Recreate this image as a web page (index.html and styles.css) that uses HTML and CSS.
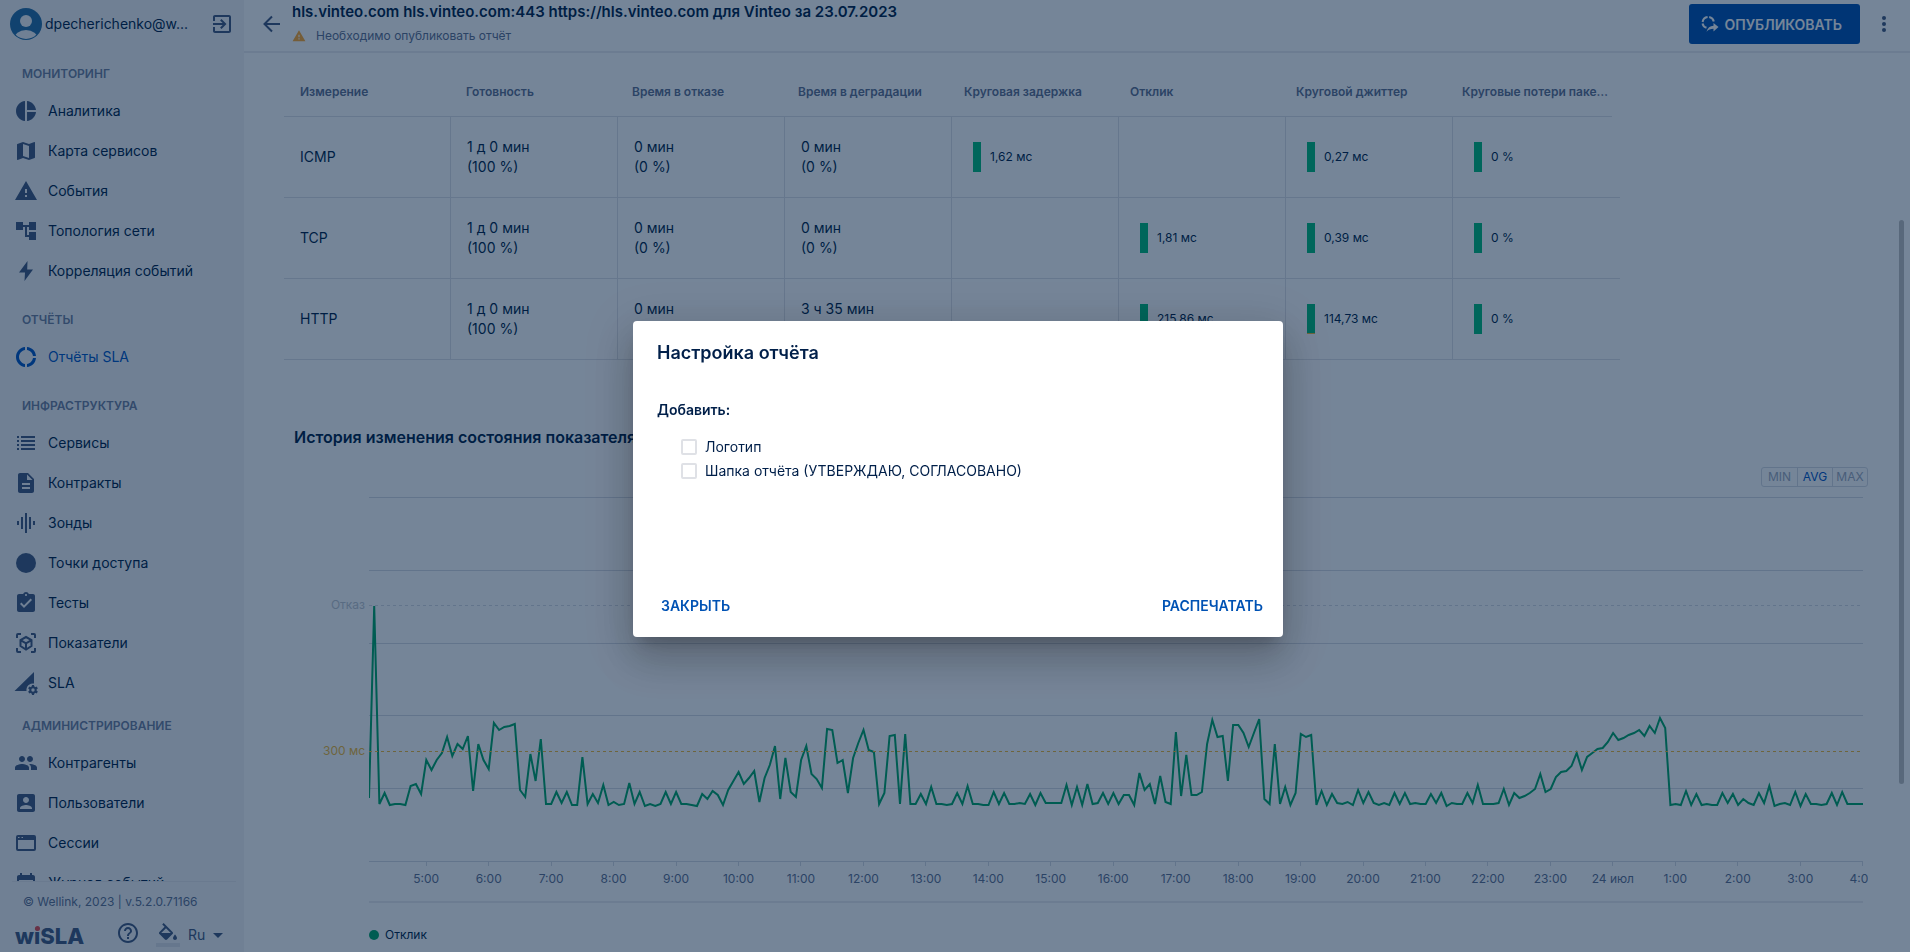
FILE: index.html
```html
<!DOCTYPE html>
<html lang="ru">
<head>
    <meta charset="UTF-8">
    <meta name="viewport" content="width=device-width, initial-scale=1.0">
    <title>wiSLA - Отчёты SLA</title>
    <link rel="stylesheet" href="styles.css">
</head>
<body>

<div class="app">
    <!-- Sidebar -->
    <aside class="sidebar">
        <div class="user">
            <svg class="avatar" viewBox="0 0 32 32">
                <defs><clipPath id="avatar-clip"><circle cx="16" cy="16" r="15"/></clipPath></defs>
                <circle cx="16" cy="16" r="16" fill="#276ea5"/>
                <g clip-path="url(#avatar-clip)" fill="#f4f5f7">
                    <circle cx="16" cy="13" r="6"/>
                    <ellipse cx="16" cy="31" rx="12" ry="9"/>
                </g>
            </svg>
            <span class="user-name">dpecherichenko@w...</span>
            <button class="icon-btn" aria-label="Выйти">
                <svg class="icon" viewBox="0 0 24 24"><path d="M10.09 15.59L11.5 17l5-5-5-5-1.41 1.41L12.67 11H3v2h9.67l-2.58 2.59zM19 3H5c-1.11 0-2 .9-2 2v4h2V5h14v14H5v-4H3v4c0 1.1.89 2 2 2h14c1.1 0 2-.9 2-2V5c0-1.1-.9-2-2-2z"/></svg>
            </button>
        </div>

        <nav class="nav">
            <section class="nav-section">
                <h2 class="nav-title">МОНИТОРИНГ</h2>
                <a class="nav-item" href="#"><svg class="icon" viewBox="0 0 24 24"><path d="M11 2v20c-5.07-.5-9-4.79-9-10s3.93-9.5 9-10zm2.03 0v8.99H22c-.47-4.74-4.24-8.52-8.97-8.99zm0 11.01V22c4.74-.47 8.5-4.25 8.97-8.99h-8.97z"/></svg>Аналитика</a>
                <a class="nav-item" href="#"><svg class="icon" viewBox="0 0 24 24"><path d="M20.5 3l-.16.03L15 5.1 9 3 3.36 4.9c-.21.07-.36.25-.36.48V20.5c0 .28.22.5.5.5l.16-.03L9 18.9l6 2.1 5.64-1.9c.21-.07.36-.25.36-.48V3.5c0-.28-.22-.5-.5-.5zM15 19l-6-2.11V5l6 2.11V19z"/></svg>Карта сервисов</a>
                <a class="nav-item" href="#"><svg class="icon" viewBox="0 0 24 24"><path d="M1 21h22L12 2 1 21zm12-3h-2v-2h2v2zm0-4h-2v-4h2v4z"/></svg>События</a>
                <a class="nav-item" href="#"><svg class="icon" viewBox="0 0 24 24"><path d="M22 11V3h-7v3H9V3H2v8h7V8h2v10h4v3h7v-8h-7v3h-2V8h2v3z"/></svg>Топология сети</a>
                <a class="nav-item" href="#"><svg class="icon" viewBox="0 0 24 24"><path d="M13.500 2L5 13.500h6L10.500 22 19 10.500h-5.800z"/></svg>Корреляция событий</a>
            </section>
            <section class="nav-section">
                <h2 class="nav-title">ОТЧЁТЫ</h2>
                <a class="nav-item active" href="#"><svg class="icon" viewBox="0 0 24 24"><path d="M11 5.080V2c-5 .5-9 4.810-9 10s4 9.500 9 10v-3.080c-3-.480-6-3.400-6-6.920s3-6.440 6-6.920zM18.970 11H22c-.470-5-4-8.530-9-9v3.080C16 5.510 18.540 8 18.970 11zM13 18.920V22c5-.470 8.530-4 9-9h-3.030c-.430 3-2.970 5.490-5.970 5.920z"/></svg>Отчёты SLA</a>
            </section>
            <section class="nav-section">
                <h2 class="nav-title">ИНФРАСТРУКТУРА</h2>
                <a class="nav-item" href="#"><svg class="icon" viewBox="0 0 24 24"><path d="M3 5h2v2H3zM7 5h14v2H7zM3 9h2v2H3zM7 9h14v2H7zM3 13h2v2H3zM7 13h14v2H7zM3 17h2v2H3zM7 17h14v2H7z"/></svg>Сервисы</a>
                <a class="nav-item" href="#"><svg class="icon" viewBox="0 0 24 24"><path d="M14 2H6c-1.100 0-1.990.900-1.990 2L4 20c0 1.100.890 2 1.990 2H18c1.100 0 2-.900 2-2V8l-6-6zm2 16H8v-2h8v2zm0-4H8v-2h8v2zm-3-5V3.500L18.500 9H13z"/></svg>Контракты</a>
                <a class="nav-item" href="#"><svg class="icon" viewBox="0 0 24 24"><path d="M7 18h2V6H7v12zm4 4h2V2h-2v20zm-8-8h2v-4H3v4zm12 4h2V6h-2v12zm4-8v4h2v-4h-2z"/></svg>Зонды</a>
                <a class="nav-item" href="#"><svg class="icon" viewBox="0 0 24 24"><circle cx="12" cy="12" r="10"/></svg>Точки доступа</a>
                <a class="nav-item" href="#"><svg class="icon" viewBox="0 0 24 24"><path d="M19 3h-4.180C14.400 1.840 13.300 1 12 1c-1.300 0-2.400.840-2.820 2H5c-1.100 0-2 .900-2 2v14c0 1.100.900 2 2 2h14c1.100 0 2-.900 2-2V5c0-1.100-.900-2-2-2zm-7 0c.550 0 1 .450 1 1s-.450 1-1 1-1-.450-1-1 .450-1 1-1zm-2 14l-4-4 1.410-1.410L10 14.170l6.590-6.590L18 9l-8 8z"/></svg>Тесты</a>
                <a class="nav-item" href="#"><svg class="icon" viewBox="0 0 24 24"><path fill="none" stroke="currentColor" stroke-width="2" d="M3 7V4q0-1 1-1h3M17 3h3q1 0 1 1v3M21 17v3q0 1-1 1h-3M7 21H4q-1 0-1-1v-3M12 6l5.500 3v6L12 18.500 6.500 15V9zM6.500 9.200L12 12.300l5.500-3.100M12 12.300v6"/></svg>Показатели</a>
                <a class="nav-item" href="#"><svg class="icon" viewBox="0 0 24 24"><path d="M20 1v11.500a6.500 6.500 0 0 0-7.500 7.500H.5z"/><circle cx="19" cy="19" r="2.700" fill="none" stroke="currentColor" stroke-width="2"/><path fill="none" stroke="currentColor" stroke-width="2.200" d="M19 14v2M19 22v2M14.700 16.500l1.700 1M21.600 20.500l1.700 1M14.700 21.500l1.700-1M21.600 17.500l1.700-1"/></svg>SLA</a>
            </section>
            <section class="nav-section compact">
                <h2 class="nav-title">АДМИНИСТРИРОВАНИЕ</h2>
                <a class="nav-item" href="#"><svg class="icon" viewBox="0 0 24 24"><path d="M16 11c1.660 0 2.990-1.340 2.990-3S17.660 5 16 5c-1.660 0-3 1.340-3 3s1.340 3 3 3zm-8 0c1.660 0 2.990-1.340 2.990-3S9.660 5 8 5C6.340 5 5 6.340 5 8s1.340 3 3 3zm0 2c-2.330 0-7 1.170-7 3.500V19h14v-2.500c0-2.330-4.670-3.500-7-3.500zm8 0c-.290 0-.620.020-.970.050 1.160.840 1.970 1.970 1.970 3.450V19h6v-2.500c0-2.330-4.670-3.500-7-3.500z"/></svg>Контрагенты</a>
                <a class="nav-item" href="#"><svg class="icon" viewBox="0 0 24 24"><path d="M3 5v14c0 1.100.890 2 2 2h14c1.100 0 2-.900 2-2V5c0-1.100-.900-2-2-2H5c-1.110 0-2 .900-2 2zm12 4c0 1.660-1.340 3-3 3s-3-1.340-3-3 1.340-3 3-3 3 1.340 3 3zm-9 8c0-2 4-3.100 6-3.100s6 1.100 6 3.100v1H6v-1z"/></svg>Пользователи</a>
                <a class="nav-item" href="#"><svg class="icon" viewBox="0 0 24 24"><path fill-rule="evenodd" d="M4 4h16a2 2 0 0 1 2 2v12a2 2 0 0 1-2 2H4a2 2 0 0 1-2-2V6a2 2 0 0 1 2-2zm0 5v9h16V9zM4 6v1h1.500V6zm3.500 0v1H9V6z"/></svg>Сессии</a>
                <a class="nav-item" href="#"><svg class="icon" viewBox="0 0 24 24"><path d="M19 4h-1V2h-2v2H8V2H6v2H5c-1.100 0-2 .900-2 2v14c0 1.100.900 2 2 2h14c1.100 0 2-.900 2-2V6c0-1.100-.900-2-2-2zm0 16H5V9h14z"/></svg>Журнал событий</a>
            </section>
        </nav>

        <footer class="sidebar-footer">
            <p class="copyright">© Wellink, 2023 | v.5.2.0.71166</p>
            <div class="footer-tools">
                <span class="logo">wiSLA<span class="logo-dot"></span></span>
                <button class="icon-btn" aria-label="Справка">
                    <svg class="icon" viewBox="0 0 24 24"><path d="M11 18h2v-2h-2v2zm1-16C6.480 2 2 6.480 2 12s4.480 10 10 10 10-4.480 10-10S17.520 2 12 2zm0 18c-4.410 0-8-3.590-8-8s3.590-8 8-8 8 3.590 8 8-3.590 8-8 8zm0-14c-2.210 0-4 1.790-4 4h2c0-1.100.900-2 2-2s2 .900 2 2c0 2-3 1.750-3 5h2c0-2.250 3-2.500 3-5 0-2.210-1.790-4-4-4z"/></svg>
                </button>
                <button class="icon-btn theme-btn" aria-label="Тема">
                    <svg class="icon" viewBox="0 0 24 24"><path d="M16.560 8.940L7.620 0 6.210 1.410l2.380 2.380-5.150 5.150c-.590.590-.590 1.540 0 2.120l5.500 5.500c.290.290.680.440 1.060.440s.770-.150 1.060-.440l5.500-5.500c.590-.580.590-1.530 0-2.120zM5.210 10L10 5.210 14.790 10H5.210zM19 11.500s-2 2.170-2 3.500c0 1.100.900 2 2 2s2-.900 2-2c0-1.330-2-3.500-2-3.500z"/><path d="M5 10h10l-5 5.500z"/><path fill="#dfe1e6" d="M0 20h24v4H0z"/></svg>
                </button>
                <button class="lang-btn">Ru <svg class="caret" viewBox="0 0 10 5"><path d="M0 0h10L5 5z"/></svg></button>
            </div>
        </footer>
    </aside>

    <!-- Report -->
    <main class="main">
        <header class="topbar">
            <button class="icon-btn" aria-label="Назад">
                <svg class="icon" viewBox="0 0 24 24"><path fill="none" stroke="currentColor" stroke-width="2" d="M20 12H5M12 4.500L4.500 12l7.500 7.500"/></svg>
            </button>
            <div class="topbar-text">
                <h1 class="report-title">hls.vinteo.com hls.vinteo.com:443 https://hls.vinteo.com для Vinteo за 23.07.2023</h1>
                <p class="report-note">
                    <svg class="warn-icon" viewBox="0 0 24 24"><path d="M1 21h22L12 2 1 21zm12-3h-2v-2h2v2zm0-4h-2v-4h2v4z"/></svg>
                    Необходимо опубликовать отчёт
                </p>
            </div>
            <button class="publish-btn">
                <svg class="publish-icon" viewBox="0 0 18 18"><path fill="none" stroke="currentColor" stroke-width="2" d="M6.600 2.100A5.800 5.800 0 0 0 1.600 7M1.500 8.500A5.800 5.800 0 0 0 5.500 12.800M8.200 2.100A5.800 5.800 0 0 1 12.800 6.500"/><path d="M12.500 8l5 4-5 4.500v-2.700c-3 0-5 .9-7 2.900 1-3.900 3.500-6 7-6z"/></svg>
                ОПУБЛИКОВАТЬ
            </button>
            <button class="icon-btn" aria-label="Меню">
                <svg class="icon" viewBox="0 0 24 24"><circle cx="12" cy="6" r="2"/><circle cx="12" cy="12" r="2"/><circle cx="12" cy="18" r="2"/></svg>
            </button>
        </header>

        <div class="content">
            <table class="metrics">
                <thead>
                    <tr>
                        <th>Измерение</th>
                        <th>Готовность</th>
                        <th>Время в отказе</th>
                        <th>Время в деградации</th>
                        <th>Круговая задержка</th>
                        <th>Отклик</th>
                        <th>Круговой джиттер</th>
                        <th>Круговые потери пакетов</th>
                    </tr>
                </thead>
                <tbody>
                    <tr>
                        <td>ICMP</td>
                        <td>1 д 0 мин<br>(100 %)</td>
                        <td>0 мин<br>(0 %)</td>
                        <td>0 мин<br>(0 %)</td>
                        <td class="metric"><span class="bar"></span>1,62 мс</td>
                        <td></td>
                        <td class="metric"><span class="bar"></span>0,27 мс</td>
                        <td class="metric"><span class="bar"></span>0 %</td>
                    </tr>
                    <tr>
                        <td>TCP</td>
                        <td>1 д 0 мин<br>(100 %)</td>
                        <td>0 мин<br>(0 %)</td>
                        <td>0 мин<br>(0 %)</td>
                        <td></td>
                        <td class="metric"><span class="bar"></span>1,81 мс</td>
                        <td class="metric"><span class="bar"></span>0,39 мс</td>
                        <td class="metric"><span class="bar"></span>0 %</td>
                    </tr>
                    <tr>
                        <td>HTTP</td>
                        <td>1 д 0 мин<br>(100 %)</td>
                        <td>0 мин<br>(0 %)</td>
                        <td>3 ч 35 мин<br>(15 %)</td>
                        <td></td>
                        <td class="metric"><span class="bar"></span>215,86 мс</td>
                        <td class="metric"><span class="bar degraded"></span>114,73 мс</td>
                        <td class="metric"><span class="bar"></span>0 %</td>
                    </tr>
                </tbody>
            </table>

            <h2 class="chart-title">История изменения состояния показателя</h2>

            <div class="agg">
                <button class="agg-btn">MIN</button>
                <button class="agg-btn active">AVG</button>
                <button class="agg-btn">MAX</button>
            </div>

            <div class="chart">
                <div class="y-labels">
                    <span class="y-fail">Отказ</span>
                    <span class="y-limit">300 мс</span>
                </div>
                <div class="plot-area">
                    <svg class="plot" viewBox="0 0 1494 365" preserveAspectRatio="none">
                        <path class="grid-line" d="M0 .5H1494M0 73.500H1494M0 146.500H1494M0 218.500H1494M0 291.500H1494M0 364.500H1494"/>
                        <path class="fail-line" d="M0 108.500H1494"/>
                        <polyline class="series" id="series"/>
                        <path class="limit-line" d="M0 254.500H1494"/>
                    </svg>
                    <div class="x-labels" id="x-labels"></div>
                    <div class="legend"><span class="legend-dot"></span>Отклик</div>
                </div>
            </div>
        </div>
        <div class="scroll-thumb"></div>
    </main>
</div>

<!-- Report settings dialog -->
<div class="overlay">
    <form class="dialog" role="dialog" aria-labelledby="dialog-title">
        <h2 class="dialog-title" id="dialog-title">Настройка отчёта</h2>
        <p class="dialog-label">Добавить:</p>
        <div class="options">
            <div class="option">
                <input type="checkbox" id="opt-logo">
                <label for="opt-logo">Логотип</label>
            </div>
            <div class="option">
                <input type="checkbox" id="opt-header">
                <label for="opt-header">Шапка отчёта (УТВЕРЖДАЮ, СОГЛАСОВАНО)</label>
            </div>
        </div>
        <div class="dialog-actions">
            <button type="button" class="text-btn">ЗАКРЫТЬ</button>
            <button type="button" class="text-btn">РАСПЕЧАТАТЬ</button>
        </div>
    </form>
</div>

<script>
    // One point every 5 minutes, measured down from the top of the plot
    const points = [
        301, 109, 307, 296, 308, 307, 307, 308, 289, 287, 297, 263, 273, 263, 256, 240, 259, 247, 252, 239,
        294, 247, 263, 272, 226, 233, 230, 229, 227, 293, 300, 257, 284, 242, 307, 307, 295, 306, 295, 308,
        308, 260, 307, 297, 306, 288, 308, 305, 308, 307, 286, 307, 295, 309, 307, 309, 307, 295, 307, 295,
        307, 307, 308, 309, 297, 302, 294, 298, 308, 293, 284, 275, 287, 281, 274, 305, 281, 268, 249, 302,
        261, 295, 300, 263, 249, 277, 282, 291, 232, 233, 266, 263, 296, 261, 246, 233, 253, 255, 307, 296,
        239, 238, 307, 237, 307, 307, 297, 307, 290, 307, 307, 308, 307, 296, 307, 289, 307, 307, 308, 308,
        295, 307, 296, 307, 307, 306, 307, 297, 308, 296, 306, 306, 306, 306, 288, 308, 290, 308, 287, 307,
        306, 296, 307, 296, 307, 298, 298, 308, 276, 293, 287, 307, 279, 305, 307, 235, 299, 258, 298, 298,
        295, 247, 223, 240, 239, 284, 228, 228, 236, 250, 236, 222, 302, 307, 247, 307, 290, 308, 296, 237,
        240, 238, 308, 294, 308, 297, 306, 307, 305, 308, 293, 306, 295, 306, 308, 306, 308, 296, 307, 296,
        307, 306, 307, 307, 297, 306, 296, 309, 306, 307, 307, 296, 306, 288, 307, 307, 307, 306, 292, 308,
        296, 301, 299, 296, 292, 277, 295, 292, 280, 275, 274, 269, 256, 273, 260, 256, 252, 251, 245, 236,
        243, 241, 238, 236, 233, 239, 229, 236, 221, 231, 308, 307, 308, 294, 308, 297, 308, 307, 308, 308,
        296, 306, 297, 308, 302, 306, 308, 296, 306, 289, 309, 307, 306, 308, 295, 309, 297, 307, 307, 308,
        307, 296, 308, 295, 307, 307, 307, 307
    ];
    const step = 1494 / (points.length - 1);
    document.getElementById('series').setAttribute('points',
        points.map((y, i) => (i * step).toFixed(1) + ',' + y).join(' '));

    // Hour labels from 5:00 to 4:00 of the next day
    const xLabels = document.getElementById('x-labels');
    for (let hour = 5; hour <= 28; hour++) {
        const label = document.createElement('span');
        label.className = 'x-label';
        label.innerText = hour === 24 ? '24 июл' : (hour % 24) + ':00';
        xLabels.appendChild(label);
    }
</script>

</body>
</html>
```
FILE: styles.css
```css
/* Basic styling */
* {
    box-sizing: border-box;
}
body {
    font-family: Inter, "Liberation Sans", sans-serif;
    font-size: 14px;
    line-height: 20px;
    color: #001f49;
    background-color: #fff;
    margin: 0;
}
h1, h2, p {
    margin: 0;
}
button {
    font-family: inherit;
    border: none;
    background: none;
    padding: 0;
    cursor: pointer;
}
.app {
    display: flex;
    height: 100vh;
    overflow: hidden;
}
.icon {
    display: block;
    flex: none;
    width: 24px;
    height: 24px;
    fill: currentColor;
    color: #42587e;
}

/* Sidebar */
.sidebar {
    display: flex;
    flex-direction: column;
    flex: 0 0 244px;
    background-color: #f4f5f7;
}
.user {
    display: flex;
    align-items: center;
    padding: 8px 10px 11px;
}
.avatar {
    width: 32px;
    height: 32px;
    margin-right: 3px;
}
.user-name {
    flex: 1;
}
.nav {
    flex: 1;
    min-height: 0;
    overflow: hidden;
}
.nav-section + .nav-section {
    margin-top: 6px;
}
.nav-section + .nav-section.compact {
    margin-top: 0;
}
.nav-title {
    height: 40px;
    padding: 4px 22px 0;
    font-size: 12px;
    font-weight: 600;
    line-height: 38px;
    color: #6f7f9e;
}
.nav-item {
    display: flex;
    align-items: center;
    gap: 10px;
    height: 40px;
    padding-left: 14px;
    color: inherit;
    text-decoration: none;
}
.nav-item.active,
.nav-item.active .icon {
    color: #0055c4;
}
.sidebar-footer {
    margin: 0 8px 0 12px;
    padding: 10px 0 1px;
    border-top: 1px solid #e6e8ec;
}
.copyright {
    padding-left: 11px;
    font-size: 12px;
    color: #5f7090;
}
.footer-tools {
    display: flex;
    align-items: center;
    height: 36px;
    margin-top: 3px;
}
.logo {
    position: relative;
    flex: none;
    width: 104px;
    padding: 6px 0 0 3px;
    font-size: 22px;
    font-weight: 800;
    line-height: 24px;
    color: #42587e;
}
.logo-dot {
    position: absolute;
    top: 8px;
    left: 23px;
    width: 5px;
    height: 5px;
    border-radius: 50%;
    background-color: #e5484d;
}
.theme-btn {
    margin: 4px 8px 0 16px;
}
.lang-btn {
    display: flex;
    align-items: center;
    gap: 8px;
    padding-top: 4px;
    font-size: 14px;
    line-height: 20px;
    color: #42587e;
}
.caret {
    width: 10px;
    height: 5px;
    fill: currentColor;
}

/* Top bar */
.main {
    position: relative;
    flex: 1;
    min-width: 0;
}
.topbar {
    display: flex;
    align-items: center;
    height: 53px;
    padding: 0 14px 3px 16px;
    border-bottom: 2px solid #ebecf0;
}
.topbar-text {
    flex: 1;
    padding-left: 8px;
}
.report-title {
    font-size: 15px;
    font-weight: 600;
    line-height: 24px;
}
.report-note {
    display: flex;
    align-items: center;
    gap: 10px;
    font-size: 12px;
    line-height: 24px;
    color: #5f7090;
}
.warn-icon {
    width: 14px;
    height: 14px;
    fill: #ffa82e;
}
.publish-btn {
    display: flex;
    align-items: center;
    gap: 6px;
    height: 40px;
    margin-right: 12px;
    padding: 0 18px 0 12px;
    border-radius: 3px;
    font-size: 14px;
    font-weight: 600;
    color: #fff;
    background-color: #0052b4;
}
.publish-icon {
    width: 18px;
    height: 18px;
    fill: currentColor;
}

/* Metrics table */
.content {
    padding: 15px 42px 0 40px;
}
.metrics {
    display: block;
}
.metrics thead,
.metrics tbody {
    display: block;
}
.metrics tr {
    display: flex;
    width: max-content;
    border-bottom: 1px solid #dfe1e6;
}
.metrics th {
    width: 166px;
    padding: 14px 2px 14px 16px;
    overflow: hidden;
    text-overflow: ellipsis;
    white-space: nowrap;
    text-align: left;
    font-size: 12px;
    font-weight: 600;
    color: #5f7090;
}
.metrics td {
    display: flex;
    align-items: center;
    width: 167px;
    height: 80px;
    padding: 0 16px;
    border-right: 1px solid #dfe1e6;
}
.metrics td:last-child {
    border-right: none;
}
.metrics .metric {
    gap: 9px;
    padding-left: 21px;
    font-size: 12px;
}
.bar {
    width: 8px;
    height: 30px;
    background-color: #00bb7a;
}
.bar.degraded {
    border-bottom: 1px solid #f0b93a;
}

/* Chart */
.chart-title {
    margin-top: 67px;
    padding-left: 10px;
    font-size: 16px;
    font-weight: 600;
}
.agg {
    display: flex;
    width: max-content;
    margin: 20px 0 0 auto;
    border: 1px solid #d5dae3;
    border-radius: 3px;
}
.agg-btn {
    width: 35px;
    height: 18px;
    font-size: 12px;
    line-height: 18px;
    color: #a0aabd;
}
.agg-btn + .agg-btn {
    border-left: 1px solid #d5dae3;
}
.agg-btn.active {
    color: #0055c4;
}
.chart {
    display: flex;
    margin-top: 10px;
}
.y-labels {
    display: flex;
    flex-direction: column;
    gap: 126px;
    width: 85px;
    padding: 98px 4px 0 0;
    font-size: 12px;
    text-align: right;
}
.y-fail {
    color: #c1c7d0;
}
.y-limit {
    color: #f0b93a;
}
.plot-area {
    flex: 1;
    min-width: 0;
}
.plot {
    display: block;
    width: calc(100% - 5px);
    height: 365px;
}
.grid-line,
.fail-line,
.limit-line,
.series {
    fill: none;
    stroke: #d5dae3;
    vector-effect: non-scaling-stroke;
}
.fail-line {
    stroke-dasharray: 3 3;
}
.limit-line {
    stroke: #f0b93a;
    stroke-dasharray: 3 3;
}
.series {
    stroke: #00a566;
    stroke-width: 2px;
}
.x-labels {
    display: grid;
    grid-template-columns: 26px repeat(24, calc(100% / 24));
    overflow: hidden;
    font-size: 12px;
    text-align: center;
    color: #5f7090;
}
.x-label:first-child {
    grid-column: 2;
}
.x-label::before {
    content: "";
    display: block;
    width: 1px;
    height: 4px;
    margin: 0 auto 3px;
    background-color: #d5dae3;
}
.legend {
    display: flex;
    align-items: center;
    gap: 6px;
    margin: 12px 5px 0 0;
    padding-top: 22px;
    border-top: 2px solid #ebecf0;
    font-size: 12px;
}
.legend-dot {
    width: 10px;
    height: 10px;
    border-radius: 50%;
    background-color: #00a566;
}
.scroll-thumb {
    position: absolute;
    top: 220px;
    right: 6px;
    width: 5px;
    height: 564px;
    border-radius: 3px;
    background-color: #c1c1c1;
}

/* Dialog */
.overlay {
    position: fixed;
    inset: 0;
    display: flex;
    align-items: center;
    justify-content: center;
    padding: 6px 0 0 6px;
    background-color: rgba(0, 30, 64, 0.54);
}
.dialog {
    width: 650px;
    padding: 20px 14px 16px 24px;
    border-radius: 4px;
    background-color: #fff;
    box-shadow: 0 11px 15px -7px rgba(0, 0, 0, 0.2), 0 24px 38px 3px rgba(0, 0, 0, 0.14), 0 9px 46px 8px rgba(0, 0, 0, 0.12);
}
.dialog-title {
    font-size: 18px;
    font-weight: 600;
    line-height: 24px;
}
.dialog-label {
    margin-top: 35px;
    font-weight: 600;
}
.options {
    padding: 15px 24px 0;
}
.option {
    display: flex;
    align-items: center;
    gap: 8px;
    height: 24px;
}
.option input {
    appearance: none;
    width: 16px;
    height: 16px;
    margin: 0;
    border: 2px solid #dfe1e6;
    border-radius: 2px;
    background-color: #fff;
}
.dialog-actions {
    display: flex;
    justify-content: space-between;
    margin-top: 106px;
}
.text-btn {
    height: 32px;
    padding: 0 6px 0 4px;
    font-size: 14px;
    font-weight: 600;
    color: #0052b4;
}
```
